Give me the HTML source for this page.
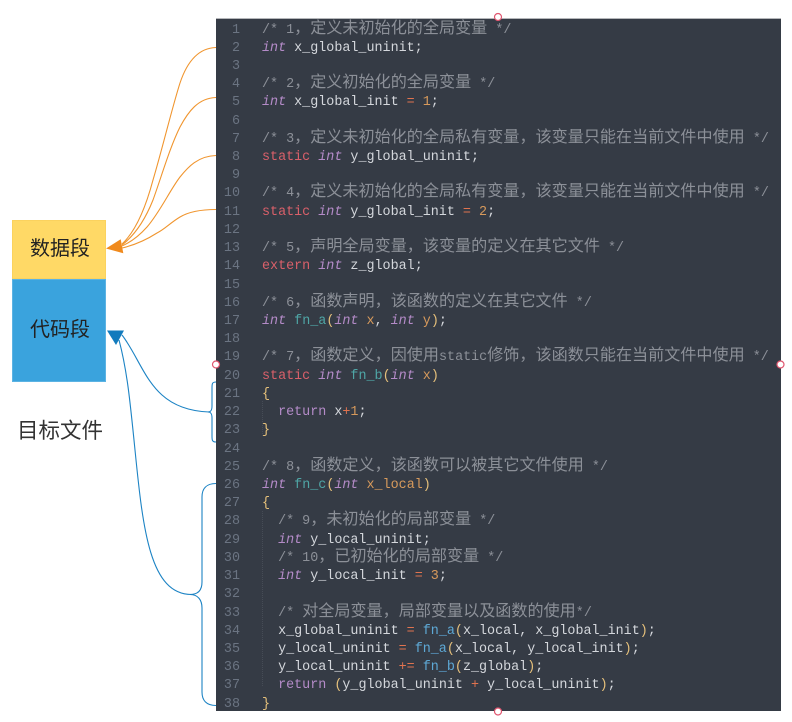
<!DOCTYPE html>
<html><head><meta charset="utf-8"><style>
html,body{margin:0;padding:0;background:#fff;width:792px;height:722px;overflow:hidden}
.a{position:absolute}
#p{left:216px;top:18px;width:565px;height:693px;background:#353b45;border-top:1px solid #b5b7ba;box-sizing:border-box}
#n{left:216px;top:21.5px;width:24px;text-align:right;color:#6b7482}
#c{left:262px;top:21.5px;color:#d4d7dc}
#n,#c{font:13.4px/18.22px "Liberation Mono",monospace;filter:blur(.25px)}
#n div,#c div{height:18.22px;white-space:pre}
i{color:#b48bc8;font-style:italic}
s{color:#8c9098;text-decoration:none}
b{font:normal 16.1px/0 "Noto Sans CJK SC",sans-serif;color:#8c9098;vertical-align:0}
u{color:#d9606a;text-decoration:none}
em{color:#4fa6a6;font-style:normal}
q{quotes:none;color:#5ea9d6}
q:before,q:after{content:none}
var{color:#d79a5c;font-style:normal}
kbd{font:inherit;color:#e0734f}
tt{font:inherit;color:#e5c07b}
svg{position:absolute;left:0;top:0}
.t{position:absolute;font-family:"Liberation Sans","Noto Sans CJK SC",sans-serif;color:#222;white-space:nowrap}
</style></head><body>
<div class="a" style="left:12px;top:220px;width:94px;height:59px;background:#ffd966;box-shadow:inset 0 0 0 1px #fbd25e"></div>
<div class="a" style="left:12px;top:279px;width:94px;height:103px;background:#3aa3dd;box-shadow:inset 0 0 0 1px #5cb3e3"></div>
<div class="t" style="left:30px;top:235px;font-size:20px;line-height:28px">数据段</div>
<div class="t" style="left:30px;top:316px;font-size:20px;line-height:28px">代码段</div>
<div class="t" style="left:17px;top:416px;font-size:21.5px;line-height:30px;color:#333">目标文件</div>
<div class="a" id="p"></div>
<div class="a" id="n"><div>1</div><div>2</div><div>3</div><div>4</div><div>5</div><div>6</div><div>7</div><div>8</div><div>9</div><div>10</div><div>11</div><div>12</div><div>13</div><div>14</div><div>15</div><div>16</div><div>17</div><div>18</div><div>19</div><div>20</div><div>21</div><div>22</div><div>23</div><div>24</div><div>25</div><div>26</div><div>27</div><div>28</div><div>29</div><div>30</div><div>31</div><div>32</div><div>33</div><div>34</div><div>35</div><div>36</div><div>37</div><div>38</div></div>
<div class="a" id="c"><div><s>/* 1</s><b>，定义未初始化的全局变量</b><s> */</s></div>
<div><i>int</i> x_global_uninit;</div>
<div></div>
<div><s>/* 2</s><b>，定义初始化的全局变量</b><s> */</s></div>
<div><i>int</i> x_global_init <kbd>=</kbd> <var>1</var>;</div>
<div></div>
<div><s>/* 3</s><b>，定义未初始化的全局私有变量，该变量只能在当前文件中使用</b><s> */</s></div>
<div><u>static</u> <i>int</i> y_global_uninit;</div>
<div></div>
<div><s>/* 4</s><b>，定义未初始化的全局私有变量，该变量只能在当前文件中使用</b><s> */</s></div>
<div><u>static</u> <i>int</i> y_global_init <kbd>=</kbd> <var>2</var>;</div>
<div></div>
<div><s>/* 5</s><b>，声明全局变量，该变量的定义在其它文件</b><s> */</s></div>
<div><u>extern</u> <i>int</i> z_global;</div>
<div></div>
<div><s>/* 6</s><b>，函数声明，该函数的定义在其它文件</b><s> */</s></div>
<div><i>int</i> <em>fn_a</em><tt>(</tt><i>int</i> <var>x</var>, <i>int</i> <var>y</var><tt>)</tt>;</div>
<div></div>
<div><s>/* 7</s><b>，函数定义，因使用</b><s>static</s><b>修饰，该函数只能在当前文件中使用</b><s> */</s></div>
<div><u>static</u> <i>int</i> <em>fn_b</em><tt>(</tt><i>int</i> <var>x</var><tt>)</tt></div>
<div><tt>{</tt></div>
<div>  <i style="font-style:normal">return</i> x<kbd>+</kbd><var>1</var>;</div>
<div><tt>}</tt></div>
<div></div>
<div><s>/* 8</s><b>，函数定义，该函数可以被其它文件使用</b><s> */</s></div>
<div><i>int</i> <em>fn_c</em><tt>(</tt><i>int</i> <var>x_local</var><tt>)</tt></div>
<div><tt>{</tt></div>
<div>  <s>/* 9</s><b>，未初始化的局部变量</b><s> */</s></div>
<div>  <i>int</i> y_local_uninit;</div>
<div>  <s>/* 10</s><b>，已初始化的局部变量</b><s> */</s></div>
<div>  <i>int</i> y_local_init <kbd>=</kbd> <var>3</var>;</div>
<div></div>
<div>  <s>/* </s><b>对全局变量，局部变量以及函数的使用</b><s>*/</s></div>
<div>  x_global_uninit <kbd>=</kbd> <q>fn_a</q><tt>(</tt>x_local, x_global_init<tt>)</tt>;</div>
<div>  y_local_uninit <kbd>=</kbd> <q>fn_a</q><tt>(</tt>x_local, y_local_init<tt>)</tt>;</div>
<div>  y_local_uninit <kbd>+=</kbd> <q>fn_b</q><tt>(</tt>z_global<tt>)</tt>;</div>
<div>  <i style="font-style:normal">return</i> <tt>(</tt>y_global_uninit <kbd>+</kbd> y_local_uninit<tt>)</tt>;</div>
<div><tt>}</tt></div></div>
<svg width="792" height="722" viewBox="0 0 792 722" fill="none">
<path d="M262.5 401v36M262.5 511v176" stroke="#464c56" stroke-dasharray="1 1"/>
<g stroke="#f0952e" stroke-width="1.1">
<path d="M216 47.5C198 48 187 62 180 83C172 108 162 150 153 180C145 210 135 232 122 244"/>
<path d="M216 97.5C198 98 188 112 180 127C170 147 162 175 153 200C145 220 135 235 122 245"/>
<path d="M216 155.5C198 156 188 167 180 177C170 190 160 212 147 227C139 236 131 242 122 246"/>
<path d="M216 209.5C204 209.5 190 211 180 217C170 223 165 229 157 233C146 240 135 245 122 248"/>
</g>
<path d="M106 248.5L120.7 239.3L123.3 253.3Z" fill="#f08a1d"/>
<g stroke="#1c83c4" stroke-width="1.1">
<path d="M216 382C212 382 212 384 212 388V406C212 410 211 412 208 412C211 412 212 414 212 418V436C212 440 212 442 216 442"/>
<path d="M209 412C150 410 145 365 122 335"/>
<path d="M216 483.5C206 483.5 202 489 202 497V582C202 590 198 594.5 190 594.5C198 594.5 202 600 202 608V692C202 700 206 705.5 216 705.5"/>
<path d="M192 594.5C150 595 143 530 135 450C130 400 127 370 119 340"/>
</g>
<path d="M107 330.5H124L116 345Z" fill="#127bbd"/>
<g fill="#fff" stroke="#e0566f" stroke-width="1.2">
<circle cx="498" cy="17" r="3.5"/><circle cx="216" cy="364.5" r="3.5"/><circle cx="780.5" cy="364.5" r="3.5"/><circle cx="498" cy="711.5" r="3.5"/>
</g>
</svg>
</body></html>
